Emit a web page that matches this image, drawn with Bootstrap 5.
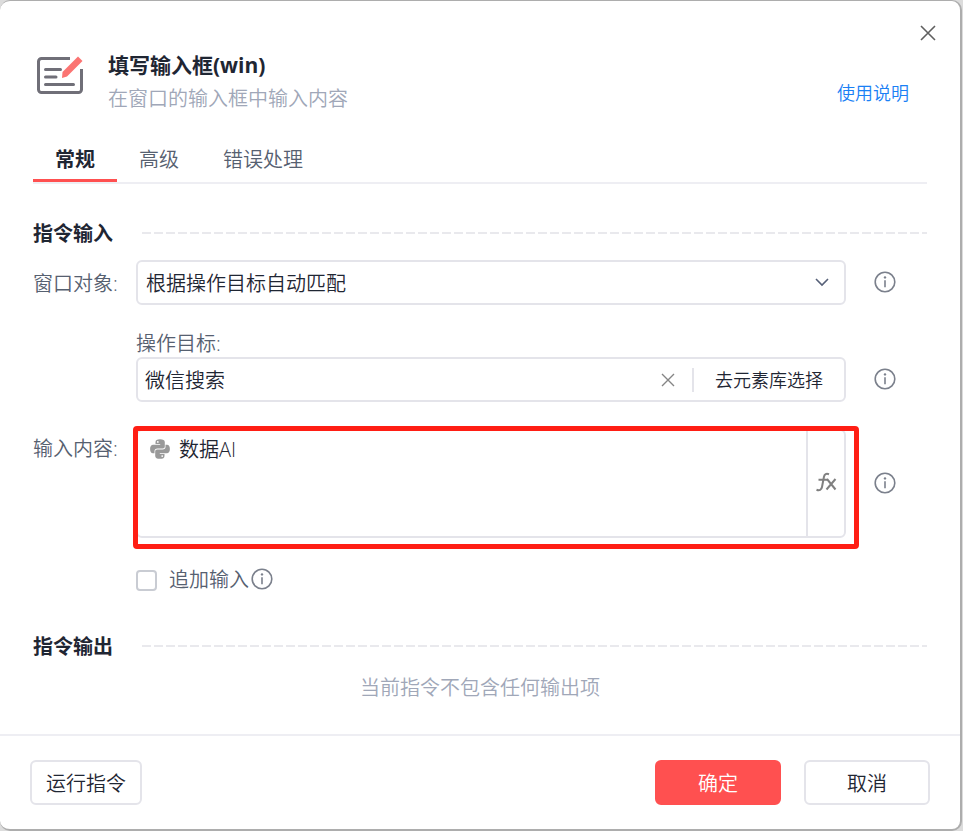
<!DOCTYPE html>
<html lang="zh-CN">
<head>
<meta charset="utf-8">
<meta name="viewport" content="width=device-width, initial-scale=1">
<title>填写输入框(win)</title>
<link href="https://cdn.jsdelivr.net/npm/bootstrap@5.3.0/dist/css/bootstrap.min.css" rel="stylesheet">
<style>
:root { --ink: #1f2633; --soft: #566070; --faint: #a0a7b8; --line: #e4e4ea; --brand: #ff5050; --text-weight: 350; }
body { background: #dcdcdc; color: var(--ink); font-family: "Open Sans", "Noto Sans CJK SC", sans-serif; font-size: 20px; line-height: 28px; font-weight: var(--text-weight); }
.dialog { min-height: 100vh; margin-right: 1px; background: #fff; border: solid #adadad; border-width: 1px 2px 2px 0; border-radius: 10px; }
.topbar { height: 49px; padding: 24px 24px 0; }
.plain { border: 0; background: none; padding: 0; color: inherit; line-height: 0; }
.inner { padding: 0 33px; }
.head-icon { margin: 4px 22px 0 1px; }
.title { font-size: 21px; line-height: 30px; font-weight: 700; }
.subtitle { color: var(--faint); line-height: 34px; padding-top: 2px; }
.help { color: #1a80f5; font-size: 18px; margin: 0 18px 9px 0; }
.tabs { margin-top: 22px; border-bottom: 2px solid #eeeef3; }
.tabs .nav-link { padding: 8px 22px 5px; height: 44px; border-bottom: 3px solid transparent; color: var(--soft); }
.tabs .nav-link.active { color: var(--ink); font-weight: 700; border-color: var(--brand); }
.heading { font-size: 20px; line-height: 28px; font-weight: 700; padding-top: 2px; }
.dashes { height: 2px; margin-left: 29px; background: repeating-linear-gradient(90deg, #e9e9ed 0 9px, transparent 9px 12px); }
.sec-in { margin-top: 34px; }
.sec-out { margin-top: 37px; }
.field { display: grid; grid-template-columns: 103px minmax(0, 1fr) 81px; align-items: center; }
.field > label { padding-top: 2px; }
.field > label, .check { color: var(--soft); }
.field-window { margin-top: 12px; }
.field-target { margin-top: 23px; }
.field-target > label, .field-target > .box { grid-column: 2; }
.field-target > label { line-height: 27px; }
.field-content { margin-top: 27px; }
.field-content > label { padding-top: 6px; }
.info { color: #7b808c; display: flex; margin-left: 28px; padding-bottom: 2px; }
.box { border: 2px solid var(--line); border-radius: 6px; background-color: #fff; min-height: 45px; }
.pick { height: 45px; padding: 2px 40px 0 8px; font-size: 20px; font-weight: var(--text-weight); color: var(--ink);
  background-image: url("data:image/svg+xml,%3Csvg xmlns='http://www.w3.org/2000/svg' viewBox='0 0 14 9'%3E%3Cpath fill='none' stroke='%23566078' stroke-width='1.6' d='M1 1l6 6 6-6'/%3E%3C/svg%3E");
  background-size: 14px 9px; background-position: right 15px center; }
.bare { border: 0; outline: 0; background: none; color: var(--ink); font-weight: var(--text-weight); min-width: 0; padding: 2px 0 0; }
.target { padding-left: 7px; }
.splitter { width: 2px; height: 24px; background: var(--line); margin-left: 17px; }
.library { font-size: 18px; font-weight: var(--text-weight); line-height: 28px; padding: 0 21px; }
.content { min-height: 109px; }
.content textarea { resize: none; padding: 5px 0 0; }
.snake { margin: 8px 9px 0 12px; color: #999; }
.fx { width: 38px; border-left: 2px solid var(--line); color: #808080; padding-bottom: 4px; }
.callout { position: absolute; inset: -3px -13px -11px -3px; border: 5px solid #ff1e14; border-radius: 4px; pointer-events: none; }
.check { margin: 28px 0 0 103px; }
.check .form-check-input { width: 21px; height: 21px; border: 2px solid #c9ccd3; border-radius: 4px; margin: 0 12px 0 0; }
.check .info { margin-left: 2px; }
.hint { color: var(--faint); margin-top: 13px; }
.foot { border-top: 2px solid #eeeef3; padding: 24px 30px; }
.act { height: 45px; border: 2px solid var(--line); border-radius: 6px; font-size: 20px; font-weight: var(--text-weight); line-height: 28px; padding: 8px 14px 5px; color: var(--ink); }
.wide { width: 126px; }
.go { background: var(--brand); border-color: var(--brand); color: #fff; margin-right: 23px; }
</style>
</head>
<body>
<svg class="d-none">
  <symbol id="i-info" viewBox="0 0 22 22"><circle cx="11" cy="11" r="9.8" fill="none" stroke="currentColor" stroke-width="1.6"/><path d="M11 9.3v7" stroke="currentColor" stroke-width="1.6"/><circle cx="11" cy="6.4" r="1.2" fill="currentColor"/></symbol>
</svg>
<main class="dialog d-flex flex-column">
  <div class="topbar d-flex justify-content-end">
    <button class="plain align-self-start" type="button" aria-label="关闭"><svg width="16" height="16" viewBox="0 0 16 16"><path d="M1 1l14 14M15 1L1 15" stroke="#606060" stroke-width="1.6"/></svg></button>
  </div>
  <div class="inner flex-grow-1">
    <header class="d-flex">
      <svg class="head-icon flex-shrink-0" width="52" height="44" viewBox="0 0 52 44"><g fill="none" stroke="#706f78" stroke-width="3"><path d="M36 4.500H7.500a3 3 0 0 0-3 3v28a3 3 0 0 0 3 3h37a3 3 0 0 0 3-3V15"/><path stroke-linecap="round" d="M11.500 15.500h15M11.500 23h10.500M11.500 30.500h28"/></g><path fill="#fb7472" d="M44 2.500l4.500 4.500-15.500 15.500-5 1.500.5-6z"/></svg>
      <div class="flex-grow-1">
        <h1 class="title mb-0">填写输入框(win)</h1>
        <p class="subtitle mb-0">在窗口的输入框中输入内容</p>
      </div>
      <a class="help align-self-end text-decoration-none" href="#">使用说明</a>
    </header>
    <nav class="tabs nav">
      <a class="nav-link active" href="#" aria-current="page">常规</a>
      <a class="nav-link" href="#">高级</a>
      <a class="nav-link" href="#">错误处理</a>
    </nav>
    <div class="sec-in d-flex align-items-center"><h2 class="heading mb-0">指令输入</h2><div class="dashes flex-grow-1"></div></div>
    <div class="field field-window">
      <label for="win">窗口对象:</label>
      <select id="win" class="form-select box pick"><option>根据操作目标自动匹配</option></select>
      <span class="info"><svg width="22" height="22"><use href="#i-info"/></svg></span>
    </div>
    <div class="field field-target">
      <label for="target">操作目标:</label>
      <div class="box target d-flex align-items-center">
        <input id="target" class="bare flex-grow-1" type="text" value="微信搜索">
        <button class="plain" type="button" aria-label="清除"><svg width="14" height="14" viewBox="0 0 14 14"><path d="M1 1l12 12M13 1L1 13" stroke="#858585" stroke-width="1.4"/></svg></button>
        <span class="splitter"></span>
        <button class="plain library" type="button">去元素库选择</button>
      </div>
      <span class="info"><svg width="22" height="22"><use href="#i-info"/></svg></span>
    </div>
    <div class="field field-content">
      <label class="align-self-start" for="content">输入内容:</label>
      <div class="position-relative">
        <div class="box content d-flex">
          <svg class="snake flex-shrink-0" width="20" height="20" viewBox="0 0 20 20" fill="currentColor"><path fill-rule="evenodd" d="M5.500 5V3C5.500 1 7 .2 10 .2s4.800.8 4.800 2.800v4.500c0 1.300-.8 2-2 2H7.500C5.500 9.500 4.500 10.500 4.500 12v2.300H3C1 14.300.1 12.600.1 10S1.200 5.700 3.200 5.700h7V5zM7.800 2a.9.9 0 1 0 0 1.800.9.9 0 0 0 0-1.800z"/><path fill-rule="evenodd" d="M14.500 15v2c0 2-1.500 2.800-4.500 2.800S5.200 19 5.200 17v-4.500c0-1.300.8-2 2-2h5.300c2 0 3-1 3-2.500V5.700H17c2 0 2.900 1.700 2.900 4.300s-1.100 4.300-3.100 4.300h-7V15zM12.200 18a.9.9 0 1 0 0-1.800.9.9 0 0 0 0 1.800z"/></svg>
          <textarea id="content" class="bare flex-grow-1">数据AI</textarea>
          <button class="plain fx" type="button" aria-label="函数"><svg width="22" height="20" viewBox="0 0 22 20" fill="none" stroke="currentColor" stroke-width="2"><path d="M14 2.200C11.300 1.100 9.500 2 8.900 5L7 15c-.5 2.800-2.500 3.800-5.500 2.700M3.500 7.800h9"/><path d="M12 7l8.500 10.500M20.500 7L11.500 17.500"/></svg></button>
        </div>
        <div class="callout"></div>
      </div>
      <span class="info"><svg width="22" height="22"><use href="#i-info"/></svg></span>
    </div>
    <div class="check d-flex align-items-center">
      <input id="append" class="form-check-input" type="checkbox">
      <label for="append">追加输入</label>
      <span class="info"><svg width="22" height="22"><use href="#i-info"/></svg></span>
    </div>
    <div class="sec-out d-flex align-items-center"><h2 class="heading mb-0">指令输出</h2><div class="dashes flex-grow-1"></div></div>
    <p class="hint text-center mb-0">当前指令不包含任何输出项</p>
  </div>
  <footer class="foot d-flex">
    <button class="btn act me-auto" type="button">运行指令</button>
    <button class="btn act wide go" type="button">确定</button>
    <button class="btn act wide" type="button">取消</button>
  </footer>
</main>
<script src="https://cdn.jsdelivr.net/npm/bootstrap@5.3.0/dist/js/bootstrap.bundle.min.js"></script>
</body>
</html>
